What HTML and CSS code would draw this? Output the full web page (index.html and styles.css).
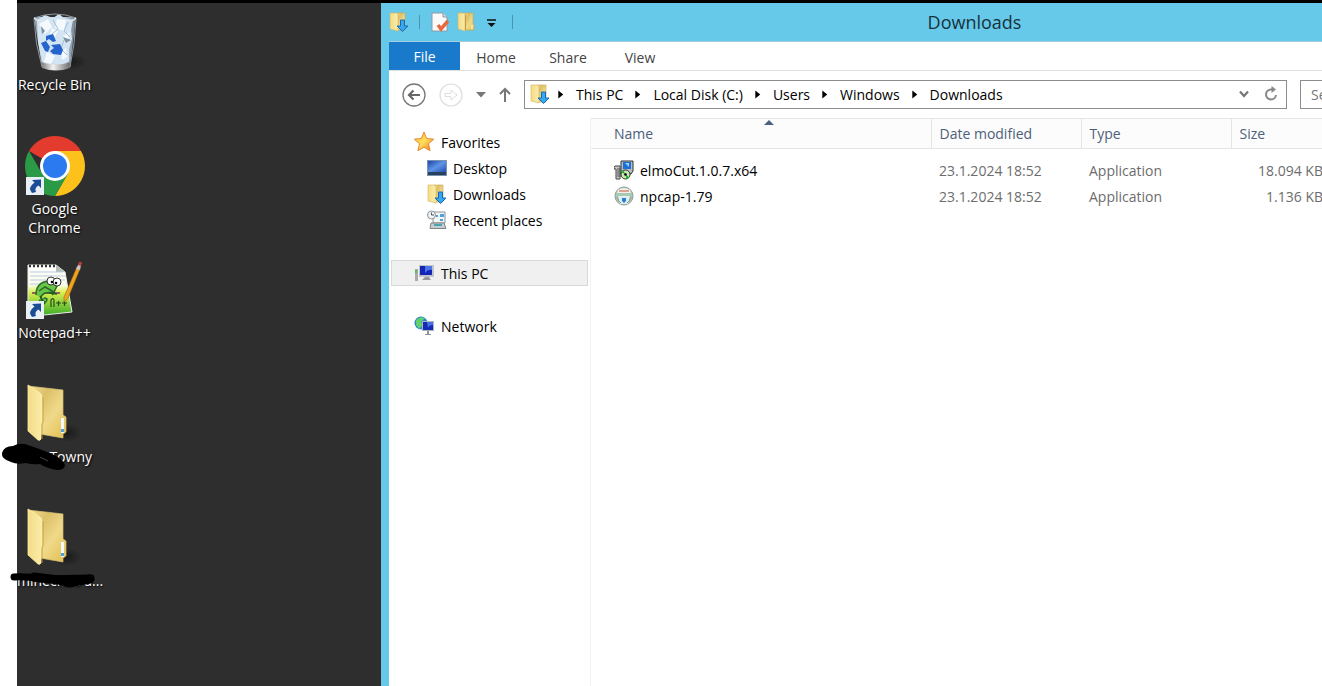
FILE: index.html
```html
<!DOCTYPE html>
<html lang="en">
<head>
  <meta charset="UTF-8">
  <meta name="viewport" content="width=device-width, initial-scale=1.0">
  <title>Downloads</title>
  <link rel="stylesheet" href="styles.css">
</head>
<body>
  <!-- shared icons -->
  <svg class="defs" width="0" height="0" aria-hidden="true">
    <defs>
      <linearGradient id="gold" x1="0" y1="0" x2="1" y2="1">
        <stop offset="0" stop-color="#f5e196"/><stop offset=".3" stop-color="#dcc069"/><stop offset=".6" stop-color="#efd98a"/><stop offset="1" stop-color="#e3bd4e"/>
      </linearGradient>
      <linearGradient id="flap" x1="0" y1="0" x2="1" y2="0">
        <stop offset="0" stop-color="#f3dc85"/><stop offset="1" stop-color="#fbecab"/>
      </linearGradient>
      <linearGradient id="screen" x1="0" y1="0" x2="1" y2="1">
        <stop offset="0" stop-color="#1f44a8"/><stop offset=".5" stop-color="#5f94e6"/><stop offset="1" stop-color="#2450b4"/>
      </linearGradient>
      <linearGradient id="paper" x1="0" y1="0" x2="0" y2="1">
        <stop offset="0" stop-color="#fff"/><stop offset=".4" stop-color="#fbfde8"/><stop offset=".55" stop-color="#d7ef4e"/><stop offset="1" stop-color="#3fae2a"/>
      </linearGradient>
      <linearGradient id="bin" x1="0" y1="0" x2="1" y2="0">
        <stop offset="0" stop-color="#8d99a4"/><stop offset=".3" stop-color="#cfdeeb"/><stop offset=".75" stop-color="#b5c8da"/><stop offset="1" stop-color="#6f7b85"/>
      </linearGradient>
      <linearGradient id="metal" x1="0" y1="0" x2="1" y2="0">
        <stop offset="0" stop-color="#777"/><stop offset=".4" stop-color="#f2f2f2"/><stop offset="1" stop-color="#666"/>
      </linearGradient>
      <radialGradient id="shade">
        <stop offset="0" stop-color="#111" stop-opacity=".7"/><stop offset="1" stop-color="#111" stop-opacity="0"/>
      </radialGradient>
      <linearGradient id="star" x1="0" y1="0" x2="1" y2="1">
        <stop offset="0" stop-color="#ffb52a"/><stop offset=".5" stop-color="#ffe05a"/><stop offset="1" stop-color="#f06a1c"/>
      </linearGradient>
      <symbol id="i-bigfolder" viewBox="0 0 60 60">
        <ellipse cx="43" cy="49" rx="16" ry="9" fill="url(#shade)"/>
        <path d="M5 2 40 6V31l3 2V48l-3 2v4L17 50Z" fill="url(#gold)" stroke="#d9c27a" stroke-width=".7"/>
        <path d="M5 1 17 9Q19 10 19 13V38l-1 2V55q-1 2-3 1L5 47Z" fill="url(#flap)" stroke="#fff0a3" stroke-width=".8"/>
        <path d="M20 13V38l-1 2V55" fill="none" stroke="#bc993b" stroke-width=".8"/>
        <path d="M38 34h3v15h-3z" fill="#f3f8fa"/>
        <path d="M38 45h3v3h-3z" fill="#4c9ce0"/>
      </symbol>
      <symbol id="i-folder" viewBox="0 0 20 20">
        <path d="M7 1h10v11l1 1v5H7z" fill="url(#gold)" stroke="#c9a548" stroke-width=".6"/>
        <path d="M2 1h5l2 1v17l-7-2z" fill="url(#flap)" stroke="#d5b55c" stroke-width=".6"/>
        <path d="M9.500 3v15" stroke="#c79d37"/>
        <path d="M15.500 13h1v4h-1z" fill="#fff"/>
      </symbol>
      <symbol id="i-down" viewBox="0 0 20 20">
        <path d="M7 1h9v17H7z" fill="url(#gold)" stroke="#c9a548" stroke-width=".6"/>
        <path d="M1 1h7l1 2v16l-8-2z" fill="url(#flap)" stroke="#d5b55c" stroke-width=".6"/>
        <path d="M11.500 8h4v6H19l-5.500 5.500L8 14h3.500z" fill="#35a8ee" stroke="#1a68b8"/>
      </symbol>
      <symbol id="i-shortcut" viewBox="0 0 18 18">
        <path d="M0 0h18v18H0z" fill="#e9f0f5"/>
        <path d="m6 3 9-.5V11l-2.500-2.500Q8 11 10 15l-4 1Q1 11 8.500 5.500z" fill="#1c4c96"/>
      </symbol>
      <symbol id="i-crumb" viewBox="0 0 6 10">
        <path d="M0 0.500 5.500 5 0 9.500z" fill="#000"/>
      </symbol>
    </defs>
  </svg>

  <div class="screen">
    <main class="desktop">
      <div class="shortcut">
        <svg class="big" viewBox="0 0 60 60">
          <ellipse cx="46" cy="50" rx="16" ry="8" fill="url(#shade)"/>
          <path d="M9 5h42L45 55q-15 6-28 0z" fill="url(#bin)"/>
          <path d="M12 8 20 3l8 3 6-4 5 4 9 2-2 10 1 9-3 10v12l-8 5-9-3-9 2-3-13-2-10z" fill="#d3e4f3"/>
          <path d="m14 12 9-5 4 8-7 7zM32 7l9 1-2 11-9-3zM22 40l8 4-4 8-7-2zM38 24l7-4-3 12zM27 16l6 3-3 6-5-3zM36 40l5-4 1 9-5 3z" fill="#f4f9fd"/>
          <path d="m28 8 5 9-6 5M39 28l-3 9 6 6M43 10l-4 9 6 6" fill="none" stroke="#a9bfd3"/>
          <path d="m38 25 8 3-5 3zM16 14l4 5-3 3z" fill="#7d90a2"/>
          <path d="m21 24 7-2 3 7-3 1-4-3-3 2zM16 31l5-2 4 6-2 5-3-1zM26 33l9-1 3 6-2 5-8-1-3-3 4-3z" fill="#2464cc"/>
          <path d="M16 50q14 5 30 0l-1 6q-14 5-28 0z" fill="url(#metal)"/>
          <path d="M9 6Q30-2 51 6" fill="none" stroke="#8e999f"/>
          <path d="M9 6q4 4 10 3M41 9q8 0 10-3" fill="none" stroke="#dfe6ea" stroke-width="1.500"/>
          <path d="M9 7q1 25 8 48M51 7q-1 25-6 48" fill="none" stroke="#8e999f"/>
        </svg>
        <span class="caption">Recycle Bin</span>
      </div>

      <div class="shortcut">
        <svg class="big" viewBox="0 0 60 60">
          <path d="M30 30 4.020 15A30 30 0 0 1 55.980 15Z" fill="#e33b2e"/>
          <path d="M30 15h25.980A30 30 0 0 1 30 60L43 37.500z" fill="#fcc21b"/>
          <path d="M4.020 15 17 37.500q6 9 19 6L30 60A30 30 0 0 1 4.020 15z" fill="#2a9a47"/>
          <path d="M17 37.500q6 9 26 0L30 60z" fill="#2a9a47"/>
          <circle cx="30" cy="30" r="15" fill="#fff"/>
          <circle cx="30" cy="30" r="12" fill="#2c7af0"/>
          <use href="#i-shortcut" x="1" y="41" width="18" height="18"/>
        </svg>
        <span class="caption">Google<br>Chrome</span>
      </div>

      <div class="shortcut">
        <svg class="big" viewBox="0 0 60 60">
          <path d="M3 5h28l9 7 7 40-28 3-16-4z" fill="url(#paper)" stroke="#e9eee8"/>
          <path d="M31 5v7h9z" fill="#b5bdb7"/>
          <path d="M4 6h27" stroke="#333" stroke-width="2.500" stroke-dasharray="2 2"/>
          <path d="M5 12h33M5 16h35M5 20h35M5 24h12" stroke="#b9cbe2"/>
          <path d="M7 33h28" stroke="#8c315a" stroke-width="1.500"/>
          <path d="M11 35q0-13 13-14l8 5-3 6-9 1q-6 3-3 8 5 3 5-2-3-2-3 0M14 31l6-4 9 5" fill="#69c544" stroke="#286b2c" stroke-width="1.500"/>
          <path d="m15 36 5 8-6-4M24 33l8 1M27 35l3-3" fill="none" stroke="#225d27" stroke-width="1.500"/>
          <circle cx="26" cy="21" r="4" fill="#fff" stroke="#333"/><circle cx="32" cy="22" r="4" fill="#fff" stroke="#333"/>
          <circle cx="27" cy="22" r="1.300"/><circle cx="31" cy="23" r="1.300"/>
          <path d="M26 47v-7q3-3 3 1v6M31 43h5M33.500 41v5M37 43h5M39.500 41v5" fill="none" stroke="#244c16" stroke-width="1.200"/>
          <path d="m39 37 13-30 3 2-12 29-4 4z" fill="#f1a51b" stroke="#93651c" stroke-width=".6"/>
          <path d="m51 9 2-4q2-2 3 0l-1 5z" fill="#c8c6c7"/><path d="m53 5 1-3q2-1 3 1l-1 3z" fill="#b4413b"/>
          <use href="#i-shortcut" x="1" y="41" width="18" height="18"/>
        </svg>
        <span class="caption">Notepad++</span>
      </div>

      <div class="shortcut">
        <svg class="big folder"><use href="#i-bigfolder"/></svg>
        <span class="caption end">Towny</span>
        <svg class="scribble" viewBox="0 0 110 40">
          <path d="M2 13q2-7 11-7Q20 2 28 5q12 4 24 9 11 5 13 11 0 5-8 5-11-2-17-6-8 1-14-1-9 2-15-1Q1 19 2 13z" fill="#000"/>
          <path d="m40 17 8 4" stroke="#444"/>
        </svg>
      </div>

      <div class="shortcut">
        <svg class="big folder"><use href="#i-bigfolder"/></svg>
        <span class="caption start">minecraft d...</span>
        <svg class="scribble" viewBox="0 0 110 40">
          <path d="M14 13q12-1 26 2l51-1" fill="none" stroke="#000" stroke-width="7" stroke-linecap="round"/>
          <path d="m34 13 24 3 12 3 20-4" fill="none" stroke="#000" stroke-width="9" stroke-linecap="round"/>
        </svg>
      </div>
    </main>

    <section class="window">
      <div class="frame">
        <header class="titlebar">
          <div class="quick">
            <svg class="icon" viewBox="0 0 20 20"><use href="#i-down"/></svg>
            <span class="sep"></span>
            <button aria-label="Properties">
              <svg class="icon" viewBox="0 0 20 20">
                <path d="M2 1h11l4 4v14H2z" fill="#fafafa" stroke="#8d9aa2"/>
                <path d="M13 1v4h4" fill="#ddd" stroke="#8d9aa2"/>
                <path d="m8 13 3 4 7-8" fill="none" stroke="#e8693c" stroke-width="3.500"/>
              </svg>
            </button>
            <button aria-label="New folder"><svg class="icon" viewBox="0 0 20 20"><use href="#i-folder"/></svg></button>
            <button aria-label="Customize toolbar">
              <svg class="icon" viewBox="0 0 20 20"><path d="M5 8h9" stroke="#111" stroke-width="1.500"/><path d="M5.500 11h8l-4 4z" fill="#111"/></svg>
            </button>
            <span class="sep"></span>
          </div>
          <h1>Downloads</h1>
        </header>

        <nav class="tabs">
          <button class="file">File</button>
          <button>Home</button>
          <button>Share</button>
          <button>View</button>
        </nav>

        <div class="toolbar">
          <button aria-label="Back">
            <svg class="round" viewBox="0 0 24 24" fill="none" stroke="#777"><circle cx="12" cy="12" r="11" stroke-width="1.300"/><path d="M18 12H7M11.500 7.500 7 12l4.500 4.500" stroke="#666" stroke-width="2.200"/></svg>
          </button>
          <button aria-label="Forward">
            <svg class="round" viewBox="0 0 24 24" fill="none" stroke="#dedede"><circle cx="12" cy="12" r="11" stroke-width="1.200"/><path d="M6 10.500h6V7l6 5-6 5v-3.500H6z"/></svg>
          </button>
          <button aria-label="Recent locations"><svg width="10" height="6" viewBox="0 0 10 6"><path d="M0 0h10L5 5.500z" fill="#777"/></svg></button>
          <button aria-label="Up"><svg class="up" viewBox="0 0 12 16" fill="none" stroke="#777" stroke-width="2"><path d="M6 15V2M1 7l5-5 5 5"/></svg></button>
          <div class="address">
            <svg class="icon" viewBox="0 0 20 20"><use href="#i-down"/></svg>
            <svg class="crumb"><use href="#i-crumb"/></svg>
            <a href="#">This PC</a>
            <svg class="crumb"><use href="#i-crumb"/></svg>
            <a href="#">Local Disk (C:)</a>
            <svg class="crumb"><use href="#i-crumb"/></svg>
            <a href="#">Users</a>
            <svg class="crumb"><use href="#i-crumb"/></svg>
            <a href="#">Windows</a>
            <svg class="crumb"><use href="#i-crumb"/></svg>
            <a href="#">Downloads</a>
            <div class="tools">
              <button aria-label="Previous locations"><svg width="10" height="8" viewBox="0 0 10 8"><path d="M1 1.500 5 6l4-4.500" fill="none" stroke="#777" stroke-width="2.200"/></svg></button>
              <button aria-label="Refresh"><svg width="14" height="16" viewBox="0 0 14 16"><path d="M8 3.500H6.500A5 5 0 1 0 12 9" fill="none" stroke="#888" stroke-width="2"/><path d="M7.500 0 12 3.500 7.500 7z" fill="#888"/></svg></button>
            </div>
          </div>
          <input class="search" type="search" placeholder="Search Downloads" aria-label="Search Downloads">
        </div>

        <div class="content">
          <nav class="tree">
            <ul>
              <li><a href="#">
                <svg class="icon" viewBox="0 0 20 20"><path d="m10 0 2.700 6.500 7 .7-5.200 4.500 1.600 7L10 15.300 3.900 18.700l1.600-7L.3 7.200l7-.7z" fill="url(#star)" stroke="#e08127" stroke-width=".9"/></svg>
                Favorites</a></li>
              <li class="sub"><a href="#">
                <svg class="icon" viewBox="0 0 20 20"><path d="M0 2h20v16H0z" fill="#7993ae"/><path d="M1 3h18v11H1z" fill="url(#screen)"/><path d="M1 14h18v3H1z" fill="#29405f"/></svg>
                Desktop</a></li>
              <li class="sub"><a href="#"><svg class="icon" viewBox="0 0 20 20"><use href="#i-down"/></svg>Downloads</a></li>
              <li class="sub"><a href="#">
                <svg class="icon" viewBox="0 0 20 20"><path d="M6 2h12v11H6z" fill="#f5f5f5" stroke="#8b9297"/><path d="M9 5h2v2H9zM13 4h4v3h-4zM13 9h3v2h-3z" fill="#4aa3dc"/><path d="M4 13h13l2 5.500H3z" fill="#c8ccce" stroke="#7f8588"/><path d="M7 14h8v2H7z" fill="#4aa3af"/><circle cx="4.500" cy="5" r="4" fill="#eef4f7" stroke="#8b9297"/><path d="M4.500 2.500V5H7" fill="none" stroke="#555"/></svg>
                Recent places</a></li>
            </ul>
            <ul>
              <li class="selected"><a href="#">
                <svg class="icon" viewBox="0 0 20 20"><path d="M1 6h3v12H1z" fill="#aaa"/><path d="M1 7h2v3H1z" fill="#4fc653"/><path d="M5 2h15v12H5z" fill="#c1c5ca"/><path d="M6 3h12v9H6z" fill="#1425b8"/><path d="M11 3h7v4q-4-1-7 3z" fill="#4a76e8"/><path d="M11 14h4l2 3H8z" fill="#999"/></svg>
                This PC</a></li>
            </ul>
            <ul>
              <li><a href="#">
                <svg class="icon" viewBox="0 0 20 20"><circle cx="7" cy="7" r="6.500" fill="#2586d2"/><path d="M2 4q4-4 9-2L7 6l2 3-4 4-3-4z" fill="#5fd06c"/><path d="M8 5h12v10H8z" fill="#aeb5bd"/><path d="M9 6h10v8H9z" fill="#1529b6"/><path d="M13 6h6v3q-4 0-5 3z" fill="#4770e0"/><path d="M13 15h2v3h-2zM11 18h6v1h-6z" fill="#8b9299"/></svg>
                Network</a></li>
            </ul>
          </nav>

          <table class="files">
            <colgroup><col class="c-name"><col class="c-date"><col class="c-type"><col class="c-size"><col></colgroup>
            <thead>
              <tr>
                <th class="sorted">Name<svg class="sort" viewBox="0 0 10 5"><path d="M0 5 5 0l5 5z" fill="#4d6082"/></svg></th>
                <th>Date modified</th><th>Type</th><th>Size</th><th></th>
              </tr>
            </thead>
            <tbody>
              <tr>
                <td><div class="name">
                  <svg class="icon" viewBox="0 0 20 20"><path d="M1 6h5v13H2V9H0V7z" fill="#c9c9c9" stroke="#444"/><path d="M7 1h12v10l-2 3H7z" fill="#b8bcc0" stroke="#333"/><path d="M9 2h8v7H9z" fill="#1d6fd8"/><path d="M11 3h4v4z" fill="#8dd5ff"/><path d="M6 8v9M4 8v9" stroke="#555"/><circle cx="11.500" cy="14.500" r="4.500" fill="#c6e8b4" stroke="#333"/><path d="M11.500 14.500 7 12l2-2zM11.500 14.500l4 3-3 2z" fill="#24ad30"/><circle cx="11.500" cy="14.500" r="1.300"/></svg>
                  elmoCut.1.0.7.x64</div></td>
                <td>23.1.2024 18:52</td><td>Application</td><td>18.094 KB</td><td></td>
              </tr>
              <tr>
                <td><div class="name">
                  <svg class="icon" viewBox="0 0 20 20"><circle cx="10" cy="10" r="9" fill="#a9c9b2" stroke="#8f9f9d"/><path d="M4 4q6-4 12 0l1 3H3z" fill="#f4eee9"/><path d="M5 5h10" stroke="#d08a78" stroke-width="1.500"/><path d="M4 10h12l-2 8H6z" fill="#dfeeee"/><path d="M3 11q1 4 4 6M17 11q-1 4-4 6" fill="none" stroke="#8a9aa0"/><path d="M8 12h4v3l-2 2-2-2z" fill="#277fd8"/></svg>
                  npcap-1.79</div></td>
                <td>23.1.2024 18:52</td><td>Application</td><td>1.136 KB</td><td></td>
              </tr>
            </tbody>
          </table>
        </div>
      </div>
    </section>
  </div>
</body>
</html>
```
FILE: styles.css
```css
* { box-sizing: border-box; }
body {
  margin: 0;
  background: #fff;
  font-family: "Open Sans", "Noto Sans", sans-serif;
  font-size: 14px;
  line-height: 19px;
}
h1, ul { margin: 0; padding: 0; }
ul { list-style: none; }
a { color: inherit; text-decoration: none; }
svg { display: block; flex: none; }
button {
  font: inherit; color: inherit;
  border: none; background: none;
  padding: 0; cursor: pointer;
}
.defs { position: absolute; }
.icon { width: 20px; height: 20px; }

.screen {
  display: flex;
  min-height: 100vh;
  margin-left: 17px;
  border-top: 3px solid #000;
  background: #2e2e2e;
}

/* desktop */
.desktop {
  width: 364px;
  flex: none;
  padding-top: 9px;
}
.shortcut {
  position: relative;
  width: 75px;
  height: 124px;
  display: flex;
  flex-direction: column;
  align-items: center;
  gap: 3px;
}
.big { width: 60px; height: 60px; }
.big.folder { align-self: flex-start; margin-left: 6px; }
.caption {
  color: #fff;
  text-align: center;
  white-space: nowrap;
  text-shadow: 1px 1px 2px #000;
}
.caption.start { align-self: flex-start; }
.caption.end { align-self: flex-end; }
/* pen marks over the last two names */
.scribble {
  position: absolute;
  left: -17px; top: 56px;
  width: 110px; height: 40px;
}

/* explorer window, its right part is cut off by the screen edge */
.window {
  flex: 1;
  min-width: 0;
  display: flex;
  overflow: hidden;
}
.frame {
  flex: none;
  width: calc(100% + 246px);
  padding: 0 8px;
  display: flex;
  flex-direction: column;
  background: #66c9ea;
  color: #000;
}
.titlebar {
  display: grid;
  grid-template-columns: 1fr auto 1fr;
  align-items: center;
  height: 38px;
}
.quick { display: flex; align-items: center; gap: 6px; }
.sep { width: 1px; height: 14px; margin: 0 4px; background: #4a93ad; }
h1 { font-size: 18px; line-height: 24px; font-weight: normal; color: #17313b; }

.tabs {
  display: flex;
  height: 30px;
  background: #fff;
  border-top: 1px solid #a5cfdf;
  border-bottom: 1px solid #dfe0e1;
  color: #444;
}
.tabs button { padding: 2px 0 0; width: 72px; }
.tabs .file { background: #1979ca; color: #fff; padding: 0; width: 71px; }

.toolbar {
  display: flex;
  align-items: center;
  gap: 13px;
  height: 47px;
  padding-left: 13px;
  background: #fff;
}
.round { width: 24px; height: 24px; }
.up { width: 12px; height: 16px; }
.address {
  flex: 1;
  display: flex;
  align-items: center;
  gap: 12px;
  height: 29px;
  padding: 0 8px 1px 5px;
  border: 1px solid #8c8c8c;
}
.address > .icon { margin-right: -4px; }
.crumb { width: 6px; height: 9px; }
.tools { display: flex; align-items: center; gap: 15px; margin-left: auto; }
.search {
  width: 260px; height: 29px;
  padding: 0 10px;
  border: 1px solid #8c8c8c;
  border-radius: 0;
  font: inherit;
}
.search::placeholder { color: #777; }

.content { flex: 1; display: flex; background: #fff; }
.tree {
  width: 202px;
  flex: none;
  display: flex;
  flex-direction: column;
  gap: 27px;
  padding: 11px 2px 0;
  border-right: 1px solid #f2f2f2;
}
.tree a {
  display: flex;
  align-items: center;
  gap: 7px;
  height: 26px;
  padding-left: 23px;
}
.tree .sub a { padding-left: 36px; gap: 6px; }
.tree .selected a {
  background: #f0f0f0;
  box-shadow: inset 0 0 0 1px #d9d9d9;
}

.files {
  flex: 1;
  align-self: flex-start;
  table-layout: fixed;
  border-collapse: collapse;
  color: #6d6d6d;
}
.c-name { width: 340px; }
.c-date, .c-type { width: 150px; }
.c-size { width: 100px; }
.files th {
  height: 30px;
  padding: 0 8px;
  text-align: left;
  font-weight: normal;
  color: #4c607a;
  background: #fcfcfc;
  border: 1px solid #e5e5e5;
  border-left: none;
}
.files .sorted { position: relative; padding-left: 23px; }
.sort { position: absolute; left: 51%; top: 1px; width: 10px; height: 5px; }
.files tbody::before { content: ""; display: block; height: 8px; }
.files td { height: 26px; padding: 0 8px; }
.files td:first-child { padding-left: 23px; color: #000; }
.files td:nth-child(4) { text-align: right; }
.name { display: flex; align-items: center; gap: 6px; }
```
